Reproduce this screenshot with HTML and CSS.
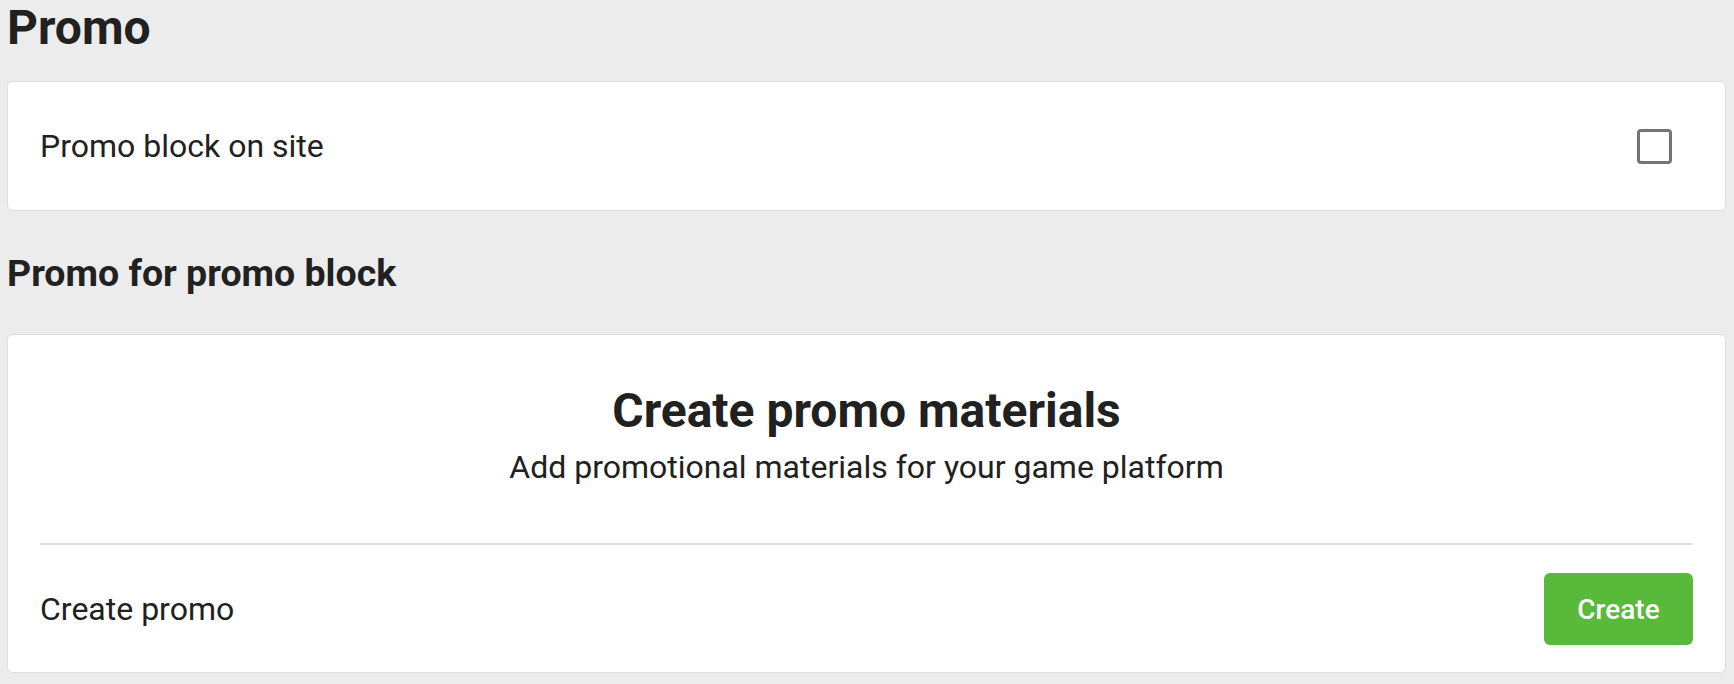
FILE: index.html
```html
<!DOCTYPE html>
<html lang="en">
<head>
<meta charset="utf-8">
<title>Promo</title>
<link rel="stylesheet" href="styles.css">
</head>
<body>
  <h1 class="page-title">Promo</h1>
  <section class="card card-row">
    <span class="row-label">Promo block on site</span>
    <span class="checkbox" role="checkbox" aria-checked="false"></span>
  </section>
  <h2 class="section-title">Promo for promo block</h2>
  <section class="card card-promo">
    <div class="promo-head">
      <h3 class="promo-title">Create promo materials</h3>
      <p class="promo-sub">Add promotional materials for your game platform</p>
    </div>
    <div class="divider"></div>
    <div class="promo-foot">
      <span class="row-label">Create promo</span>
      <button class="btn-create" type="button">Create</button>
    </div>
  </section>
</body>
</html>
```
FILE: styles.css
```css
html, body {
  background: #ececec;
}
body {
  margin: 0 8px 0 7px;
  font-family: Roboto, "Noto Sans", sans-serif;
  color: #212121;
}
.page-title {
  margin: 0;
  font-size: 48px;
  line-height: 56px;
  font-weight: 700;
}
.card {
  background: #fff;
  border: 1px solid #dedede;
  border-radius: 6px;
  box-sizing: border-box;
}
.card-row {
  margin-top: 25px;
  height: 130px;
  display: flex;
  align-items: center;
  justify-content: space-between;
  padding: 0 53px 0 32px;
}
.row-label {
  font-size: 32px;
  line-height: 38px;
}
.checkbox {
  width: 35px;
  height: 35px;
  box-sizing: border-box;
  border: 3.5px solid #757575;
  border-radius: 4px;
}
.section-title {
  margin: 40px 0 39px;
  font-size: 37.5px;
  line-height: 44px;
  font-weight: 700;
}
.card-promo {
  padding: 49px 32px 27px;
}
.promo-head {
  text-align: center;
}
.promo-title {
  margin: 0;
  font-size: 48px;
  line-height: 54px;
  font-weight: 700;
}
.promo-sub {
  margin: 10px 0 0;
  font-size: 32px;
  line-height: 38px;
}
.divider {
  margin-top: 57px;
  height: 2px;
  background: #e0e0e0;
}
.promo-foot {
  margin-top: 28px;
  display: flex;
  align-items: center;
  justify-content: space-between;
}
.btn-create {
  width: 149px;
  height: 72px;
  border: none;
  border-radius: 6px;
  background: #59b93b;
  color: #fff;
  font-family: Roboto, "Noto Sans", sans-serif;
  font-size: 28px;
  font-weight: 500;
  padding: 0;
}
```
